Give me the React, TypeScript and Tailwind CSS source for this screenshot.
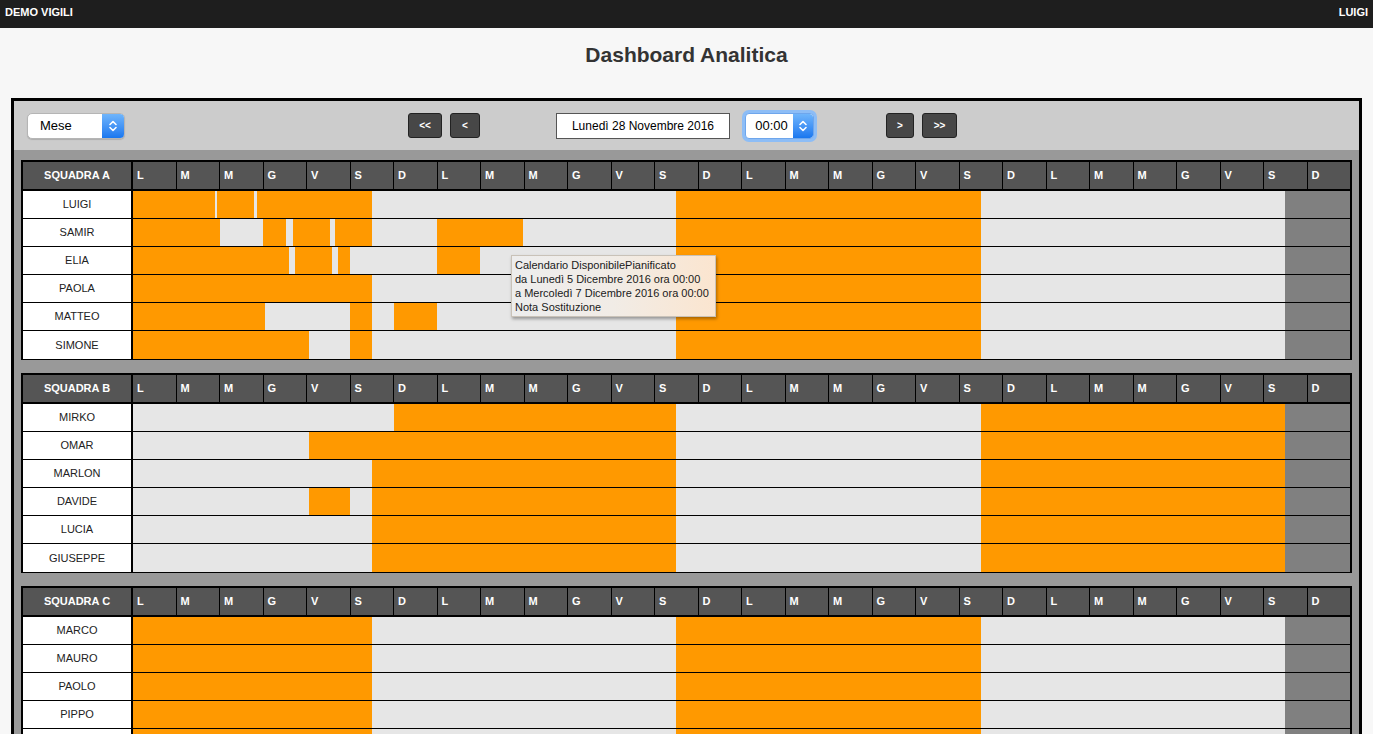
import type { ReactNode } from "react"

// intervalli in giorni (0 = lunedì 28 novembre, 28 colonne)
type Span = [number, number]

interface Member {
  name: string
  spans: Span[]
}

interface Team {
  name: string
  members: Member[]
}

const DAYS = ["L", "M", "M", "G", "V", "S", "D"]
const TOTAL = 28
const ALL_DAYS = Array.from({ length: TOTAL }, (_, i) => DAYS[i % 7])

const WEEK_A: Span[] = [
  [0, 5.5],
  [12.5, 19.5],
]
const WEEK_B: Span[] = [
  [5.5, 12.5],
  [19.5, 26.5],
]

const teams: Team[] = [
  {
    name: "SQUADRA A",
    members: [
      { name: "LUIGI", spans: [[0, 1.88], [1.93, 2.78], [2.85, 5.5], [12.5, 19.5]] },
      { name: "SAMIR", spans: [[0, 2], [3, 3.53], [3.67, 4.53], [4.65, 5.5], [7, 8.98], [12.5, 19.5]] },
      { name: "ELIA", spans: [[0, 3.6], [3.72, 4.59], [4.71, 5], [7, 7.98], [12.5, 19.5]] },
      { name: "PAOLA", spans: WEEK_A },
      { name: "MATTEO", spans: [[0, 3.03], [5, 5.5], [6, 7], [12.5, 19.5]] },
      { name: "SIMONE", spans: [[0, 4.04], [5, 5.5], [12.5, 19.5]] },
    ],
  },
  {
    name: "SQUADRA B",
    members: [
      { name: "MIRKO", spans: [[6, 12.5], [19.5, 26.5]] },
      { name: "OMAR", spans: [[4.04, 12.5], [19.5, 26.5]] },
      { name: "MARLON", spans: WEEK_B },
      { name: "DAVIDE", spans: [[4.04, 5], [5.5, 12.5], [19.5, 26.5]] },
      { name: "LUCIA", spans: WEEK_B },
      { name: "GIUSEPPE", spans: WEEK_B },
    ],
  },
  {
    name: "SQUADRA C",
    members: [
      { name: "MARCO", spans: WEEK_A },
      { name: "MAURO", spans: WEEK_A },
      { name: "PAOLO", spans: WEEK_A },
      { name: "PIPPO", spans: WEEK_A },
      { name: "FRANCO", spans: WEEK_A },
      { name: "GINO", spans: WEEK_A },
    ],
  },
]

function pct(v: number) {
  return `${(v / TOTAL) * 100}%`
}

function Stepper({ className }: { className: string }) {
  return (
    <div
      className={`flex items-center justify-center bg-linear-to-b from-[#6fb5fb] to-[#1877ef] ${className}`}
    >
      <svg width="10" height="14" viewBox="0 0 10 14" fill="none">
        <path d="M2 5.5 L5 2.5 L8 5.5" stroke="white" strokeWidth="1.6" strokeLinecap="round" strokeLinejoin="round" />
        <path d="M2 8.5 L5 11.5 L8 8.5" stroke="white" strokeWidth="1.6" strokeLinecap="round" strokeLinejoin="round" />
      </svg>
    </div>
  )
}

function NavButton({ children, width }: { children: ReactNode; width: string }) {
  return (
    <button
      className={`flex h-[25px] ${width} items-center justify-center rounded-[3px] border border-[#222] bg-[#474747] text-[10px] font-bold text-white`}
    >
      {children}
    </button>
  )
}

function TeamTable({ team }: { team: Team }) {
  return (
    <div className="border-x-2 border-t-2 border-b border-black">
      <div className="flex h-[29px] border-b-2 border-black bg-[#555]">
        <div className="flex w-[110px] shrink-0 items-center justify-center border-r-2 border-black text-[11px] font-bold text-white">
          {team.name}
        </div>
        <div className="flex flex-1">
          {ALL_DAYS.map((d, i) => (
            <div
              key={i}
              className={`flex flex-1 basis-0 items-center pl-[4px] text-[11px] font-bold text-white ${
                i > 0 ? "border-l border-black" : ""
              }`}
            >
              {d}
            </div>
          ))}
        </div>
      </div>
      {team.members.map((m, idx) => (
        <div
          key={m.name}
          className={`flex h-[28px] ${idx < team.members.length - 1 ? "border-b border-black" : ""}`}
        >
          <div className="flex w-[110px] shrink-0 items-center justify-center border-r-2 border-black bg-white text-[11px] text-[#222]">
            {m.name}
          </div>
          <div className="relative flex-1 bg-[#e6e6e6]">
            {m.spans.map(([a, b], i) => (
              <div
                key={i}
                className="absolute top-0 bottom-0 bg-[#ff9900]"
                style={{ left: pct(a), width: pct(b - a) }}
              />
            ))}
            <div
              className="absolute top-0 bottom-0 bg-[#808080]"
              style={{ left: pct(26.5), width: pct(1.5) }}
            />
          </div>
        </div>
      ))}
    </div>
  )
}

export default function App() {
  return (
    <div className="min-h-screen bg-[#f7f7f7] font-['Liberation_Sans',Arial,sans-serif]">
      <div className="flex h-[28px] items-start justify-between bg-[#1e1e1e] px-[5px] pt-[6px] text-[11px] leading-[13px] font-bold text-white">
        <span>DEMO VIGILI</span>
        <span>LUIGI</span>
      </div>

      <div className="h-[70px] pt-[14px] text-center text-[21px] leading-[26px] font-bold text-[#333]">
        Dashboard Analitica
      </div>

      <div className="mx-[11px] border-[3px] border-black">
        {/* barra dei comandi */}
        <div className="grid h-[49px] grid-cols-[1fr_auto_1fr] items-center bg-[#cccccc] pr-[21px] pl-[13px]">
          <div className="flex">
            <div className="flex h-[26px] w-[98px] overflow-hidden rounded-[5px] border border-[#b5b5b5] bg-white shadow-[0_1px_1px_rgba(0,0,0,0.15)]">
              <div className="flex flex-1 items-center pl-[12px] text-[13px] text-black">Mese</div>
              <Stepper className="w-[22px]" />
            </div>
          </div>

          <div className="flex items-center">
            <NavButton width="w-[34px]">&lt;&lt;</NavButton>
            <div className="ml-[8px]">
              <NavButton width="w-[30px]">&lt;</NavButton>
            </div>
            <div className="ml-[76px] flex h-[26px] w-[174px] items-center justify-center border border-[#555] bg-white text-[12px] text-black">
              Lunedì 28 Novembre 2016
            </div>
            <div className="ml-[15px] flex h-[26px] w-[69px] overflow-hidden rounded-[4px] border border-[#6ea6ec] bg-white ring-[3px] ring-[#8dbdf6]">
              <div className="flex flex-1 items-center justify-center pl-[4px] text-[13px] text-black">00:00</div>
              <Stepper className="w-[20px] rounded-r-[3px]" />
            </div>
            <div className="ml-[72px]">
              <NavButton width="w-[28px]">&gt;</NavButton>
            </div>
            <div className="ml-[8px]">
              <NavButton width="w-[35px]">&gt;&gt;</NavButton>
            </div>
          </div>

          <div />
        </div>

        {/* calendari squadre */}
        <div className="relative flex flex-col gap-[13px] bg-[#999999] px-[7px] pt-[10px] pb-[14px]">
          {teams.map((t) => (
            <TeamTable key={t.name} team={t} />
          ))}

          <div className="absolute top-[105px] left-[497px] w-[205px] border border-[#c9c2b8] bg-linear-to-r from-[#ededed] via-[#f1ece6] to-[#fbe5cf] px-[3px] py-[2px] text-[11px] leading-[14px] text-[#1a1a1a] shadow-[1px_2px_3px_rgba(0,0,0,0.35)]">
            <div>Calendario DisponibilePianificato</div>
            <div>da Lunedì 5 Dicembre 2016 ora 00:00</div>
            <div>a Mercoledì 7 Dicembre 2016 ora 00:00</div>
            <div>Nota Sostituzione</div>
          </div>
        </div>
      </div>
    </div>
  )
}
